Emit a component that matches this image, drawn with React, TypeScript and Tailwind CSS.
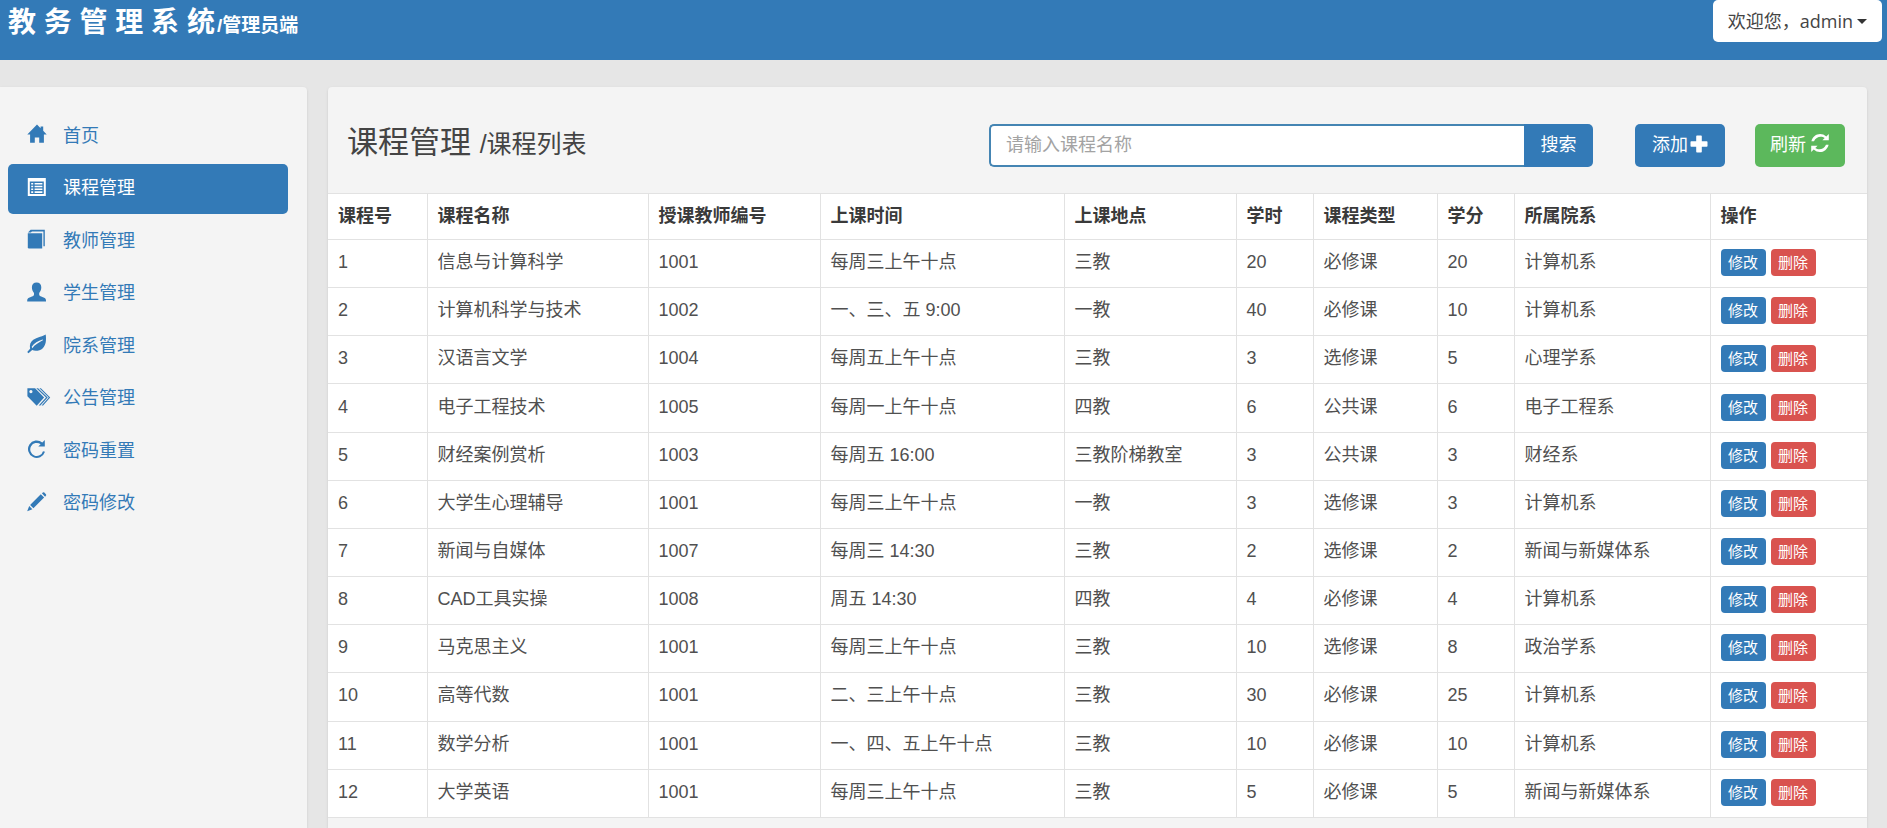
import type { ReactNode } from "react";

interface Course {
  id: number;
  name: string;
  teacher: string;
  time: string;
  place: string;
  hours: number;
  type: string;
  credit: number;
  dept: string;
}

const courses: Course[] = [
  { id: 1, name: "信息与计算科学", teacher: "1001", time: "每周三上午十点", place: "三教", hours: 20, type: "必修课", credit: 20, dept: "计算机系" },
  { id: 2, name: "计算机科学与技术", teacher: "1002", time: "一、三、五 9:00", place: "一教", hours: 40, type: "必修课", credit: 10, dept: "计算机系" },
  { id: 3, name: "汉语言文学", teacher: "1004", time: "每周五上午十点", place: "三教", hours: 3, type: "选修课", credit: 5, dept: "心理学系" },
  { id: 4, name: "电子工程技术", teacher: "1005", time: "每周一上午十点", place: "四教", hours: 6, type: "公共课", credit: 6, dept: "电子工程系" },
  { id: 5, name: "财经案例赏析", teacher: "1003", time: "每周五 16:00", place: "三教阶梯教室", hours: 3, type: "公共课", credit: 3, dept: "财经系" },
  { id: 6, name: "大学生心理辅导", teacher: "1001", time: "每周三上午十点", place: "一教", hours: 3, type: "选修课", credit: 3, dept: "计算机系" },
  { id: 7, name: "新闻与自媒体", teacher: "1007", time: "每周三 14:30", place: "三教", hours: 2, type: "选修课", credit: 2, dept: "新闻与新媒体系" },
  { id: 8, name: "CAD工具实操", teacher: "1008", time: "周五 14:30", place: "四教", hours: 4, type: "必修课", credit: 4, dept: "计算机系" },
  { id: 9, name: "马克思主义", teacher: "1001", time: "每周三上午十点", place: "三教", hours: 10, type: "选修课", credit: 8, dept: "政治学系" },
  { id: 10, name: "高等代数", teacher: "1001", time: "二、三上午十点", place: "三教", hours: 30, type: "必修课", credit: 25, dept: "计算机系" },
  { id: 11, name: "数学分析", teacher: "1001", time: "一、四、五上午十点", place: "三教", hours: 10, type: "必修课", credit: 10, dept: "计算机系" },
  { id: 12, name: "大学英语", teacher: "1001", time: "每周三上午十点", place: "三教", hours: 5, type: "必修课", credit: 5, dept: "新闻与新媒体系" },
];

const columns = [
  { title: "课程号", width: "w-[99px]" },
  { title: "课程名称", width: "w-[221px]" },
  { title: "授课教师编号", width: "w-[172px]" },
  { title: "上课时间", width: "w-[244px]" },
  { title: "上课地点", width: "w-[172px]" },
  { title: "学时", width: "w-[77px]" },
  { title: "课程类型", width: "w-[124px]" },
  { title: "学分", width: "w-[77px]" },
  { title: "所属院系", width: "w-[196px]" },
  { title: "操作", width: "w-[157px]" },
];

function Icon({ children, wide }: { children: ReactNode; wide?: boolean }) {
  return (
    <svg
      viewBox={wide ? "0 0 24 20" : "0 0 20 20"}
      className={wide ? "h-5 w-6 shrink-0" : "h-5 w-5 shrink-0"}
      fill="currentColor"
      aria-hidden="true"
    >
      {children}
    </svg>
  );
}

const HomeIcon = () => (
  <Icon>
    <path d="M10 .6 13.600 4.200V2.600h2.600v4.200l3.500 3.800h-2.800v8.200h-4.700v-5.300H7.800v5.300H3.100v-8.200H.3z" />
  </Icon>
);

const ListIcon = () => (
  <Icon>
    <path
      fillRule="evenodd"
      d="M.8 1h18v18H.8zM2.800 4.400v12.700h14V4.400zM4.200 5.900h2v1.600h-2zm3.400 0h7.800v1.600H7.600zM4.200 8.700h2v1.600h-2zm3.400 0h7.800v1.600H7.600zM4.200 11.500h2v1.600h-2zm3.400 0h7.800v1.600H7.600zM4.200 14.300h2v1.600h-2zm3.400 0h7.800v1.600H7.600z"
    />
  </Icon>
);

const BookIcon = () => (
  <Icon>
    <path d="M.8 4.300h14.400v15.100H2q-1.200 0-1.200-1.200z" />
    <path d="M1 3.500 3.600.8h14.200v16.400h-1.400V2.400H4.900L3.900 3.500z" />
  </Icon>
);

const UserIcon = () => (
  <Icon>
    <path d="M9.600.6c2.900 0 4.700 1.900 4.700 4.600 0 2.400-.9 4.400-2.100 5.700v1.700c0 .9.500 1.300 1.400 1.700l3.600 1.500c1.400.6 1.800 1.500 1.800 3v.6H.2v-.6c0-1.500.4-2.400 1.800-3l3.600-1.500c.9-.4 1.400-.8 1.400-1.700v-1.700C5.800 9.600 4.900 7.600 4.900 5.200 4.900 2.500 6.700.6 9.600.6z" />
  </Icon>
);

const LeafIcon = () => (
  <Icon>
    <path
      fillRule="evenodd"
      d="M18.700.6c.8 5.700.2 10.800-2.900 13.600-2.900 2.600-7.500 3.200-10.600 1.900L1.500 19.200.2 18.100l2.900-3.400C2.300 11 3.500 7.800 6.300 5.800 10 3.200 14.800 3.200 18.700.6zM15.600 5.400C11 6.700 7.200 9 4.700 12.700l.6 1.500c2.500-3.300 6-5.300 10-7.600.7-.4.900-.9.300-1.200z"
    />
  </Icon>
);

const TagsIcon = () => (
  <Icon wide>
    <path fillRule="evenodd" d="M.4 1.200h7.700l9 9.200-7.400 8.400L.4 9.200zM3.900 3a1.600 1.600 0 1 0 .01 0z" />
    <path d="M10.800 1.200h1.800l9.600 9.400-7.300 8h-1.700l7.300-8z" transform="translate(-1.500 0)" />
    <path d="M12.400 1.200h1.500l9.300 9.400-7.100 8h-1.500l7.100-8z" />
  </Icon>
);

const RepeatIcon = () => (
  <Icon>
    <path d="M15.300 3.500 17.800 1v6.500h-6.500l2.300-2.300a6.500 6.500 0 1 0 2.400 7l2 .6A8.700 8.700 0 1 1 15.300 3.500z" />
  </Icon>
);

const PencilIcon = () => (
  <Icon>
    <path d="m14.900 1.200 1-.8q.8-.4 1.400.2l1.600 1.600q.6.700.1 1.400l-.9 1.100zM13.800 2.300l3.300 3.300L6.400 16.300l-3.300-3.300zM2.200 14l3.200 3.200-5.200 2z" />
  </Icon>
);

const PlusIcon = () => (
  <svg viewBox="0 0 18 18" className="mb-[3px] h-[18px] w-[18px]" fill="currentColor" aria-hidden="true">
    <path d="M7 .5h4q.8 0 .8.800v4.900h4.900q.8 0 .8.800v4q0 .8-.8.800h-4.900v4.900q0 .8-.8.800H7q-.8 0-.8-.8v-4.900H1.300q-.8 0-.8-.8V7q0-.8.8-.8h4.900V1.300Q6.200.5 7 .5z" />
  </svg>
);

const RefreshIcon = () => (
  <svg viewBox="0 0 20 20" className="mb-1 h-5 w-5" fill="currentColor" aria-hidden="true">
    <path d="M16.300 3.400 18.800.9v6.400h-6.400l2.300-2.300C11.500 2.500 6 3.400 4 8.300H1.400C3 1.200 11-1.500 16.300 3.400z" />
    <path d="M3.700 16.600 1.200 19.100v-6.400h6.400l-2.300 2.300c3.200 2.500 8.700 1.600 10.700-3.300h2.600C17 18.800 9 21.500 3.700 16.600z" />
  </svg>
);

const menu = [
  { label: "首页", icon: <HomeIcon /> },
  { label: "课程管理", icon: <ListIcon />, active: true },
  { label: "教师管理", icon: <BookIcon /> },
  { label: "学生管理", icon: <UserIcon /> },
  { label: "院系管理", icon: <LeafIcon /> },
  { label: "公告管理", icon: <TagsIcon /> },
  { label: "密码重置", icon: <RepeatIcon /> },
  { label: "密码修改", icon: <PencilIcon /> },
];

function TopBar() {
  return (
    <header className="flex h-[60px] items-start justify-between bg-[#337ab7] pr-[5px] pl-2">
      <h1 className="pt-[3px] text-[28px] leading-10 font-bold text-white">
        教 务 管 理 系 统<small className="pl-0.5 text-[19px]">/管理员端</small>
      </h1>
      <button className="flex h-[42px] items-center rounded-[5px] bg-white px-[15px] font-['Open_Sans','Noto_Sans_CJK_SC',sans-serif] text-[#444]">
        欢迎您，admin
        <span className="ml-1 border-x-5 border-t-5 border-x-transparent border-t-[#333]" />
      </button>
    </header>
  );
}

function Sidebar() {
  return (
    <aside className="w-[307px] shrink-0 rounded-tr bg-[#f4f4f4] pt-6 pr-[19px] pl-2 shadow-sm">
      <nav className="flex min-h-[418px] flex-col justify-between">
        {menu.map((item) => (
          <a
            key={item.label}
            href="#"
            className={`flex h-[50px] items-center rounded-[5px] pl-[19px] ${
              item.active ? "bg-[#337ab7] text-white" : "text-[#337ab7]"
            }`}
          >
            <span className="flex w-9 pb-1">{item.icon}</span>
            {item.label}
          </a>
        ))}
      </nav>
    </aside>
  );
}

function Toolbar() {
  return (
    <div className="flex h-[106px] items-center pt-[10px] pr-[22px] pl-[19px]">
      <h2 className="pb-1 text-[31px] leading-10 text-[#444]">
        课程管理 <small className="text-[25px]">/课程列表</small>
      </h2>
      <form className="ml-auto flex h-[43px] w-[604px]" onSubmit={(e) => e.preventDefault()}>
        <input
          type="text"
          aria-label="课程名称"
          placeholder="请输入课程名称"
          className="min-w-0 flex-1 rounded-l-[5px] border-2 border-r-0 border-[#4585b3] bg-white px-[15px] placeholder:text-[#a3a3a3]"
        />
        <button type="submit" className="w-[69px] rounded-r-[5px] bg-[#337ab7] text-white">
          搜索
        </button>
      </form>
      <button className="ml-[42px] flex h-[43px] w-[90px] items-center justify-center gap-0.5 rounded-[5px] bg-[#337ab7] text-white">
        添加
        <PlusIcon />
      </button>
      <button className="ml-[30px] flex h-[43px] w-[90px] items-center justify-center gap-1 rounded-[5px] bg-[#5cb85c] text-white">
        刷新
        <RefreshIcon />
      </button>
    </div>
  );
}

function CourseTable() {
  return (
    <table className="h-[625px] w-full table-fixed border-collapse bg-white text-left text-[#505050]">
      <thead>
        <tr className="h-[46px]">
          {columns.map((col) => (
            <th
              key={col.title}
              className={`${col.width} border border-[#e2e2e2] px-[10px] font-bold whitespace-nowrap text-[#3a3a3a] first:border-l-0 last:border-r-0`}
            >
              {col.title}
            </th>
          ))}
        </tr>
      </thead>
      <tbody className="[&_td]:border [&_td]:border-[#e2e2e2] [&_td]:px-[10px] [&_td]:pb-0.5 [&_td]:whitespace-nowrap [&_td:first-child]:border-l-0 [&_td:last-child]:border-r-0">
        {courses.map((c) => (
          <tr key={c.id}>
            <td>{c.id}</td>
            <td>{c.name}</td>
            <td>{c.teacher}</td>
            <td>{c.time}</td>
            <td>{c.place}</td>
            <td>{c.hours}</td>
            <td>{c.type}</td>
            <td>{c.credit}</td>
            <td>{c.dept}</td>
            <td>
              <div className="flex gap-[5px] text-[15px] text-white">
                <button className="h-[27px] w-[45px] rounded bg-[#337ab7]">修改</button>
                <button className="h-[27px] w-[45px] rounded bg-[#d9534f]">删除</button>
              </div>
            </td>
          </tr>
        ))}
      </tbody>
    </table>
  );
}

export default function App() {
  return (
    <div className="flex min-h-screen flex-col bg-[#e6e6e6] font-['Liberation_Sans','Noto_Sans_CJK_SC',sans-serif] text-[18px] leading-[25px]">
      <TopBar />
      <div className="flex flex-1 gap-[21px] pt-[27px] pr-5">
        <Sidebar />
        <main className="min-w-0 flex-1 rounded-t bg-[#f4f4f4] shadow-sm">
          <Toolbar />
          <CourseTable />
        </main>
      </div>
    </div>
  );
}
